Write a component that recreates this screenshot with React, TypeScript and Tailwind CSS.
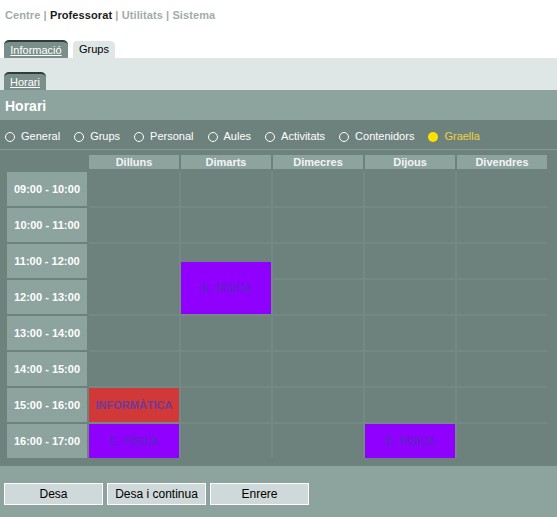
import React from 'react';

const days = ['Dilluns', 'Dimarts', 'Dimecres', 'Dijous', 'Divendres'];
const hours = [
  '09:00 - 10:00',
  '10:00 - 11:00',
  '11:00 - 12:00',
  '12:00 - 13:00',
  '13:00 - 14:00',
  '14:00 - 15:00',
  '15:00 - 16:00',
  '16:00 - 17:00',
];
const options = ['General', 'Grups', 'Personal', 'Aules', 'Activitats', 'Contenidors', 'Graella'];

const Radio = ({ label, active }: { label: string; active?: boolean }) => (
  <div className="flex items-center mr-[14px]">
    {active ? (
      <span className="w-[10px] h-[10px] rounded-full bg-[#ffe000]" />
    ) : (
      <span className="w-[10px] h-[10px] rounded-full border border-white" />
    )}
    <span className={`ml-[6px] ${active ? 'text-[#f2d23a]' : 'text-white'}`}>{label}</span>
  </div>
);

export default function App() {
  return (
    <div className="w-[557px] h-[517px] flex flex-col bg-white font-['Liberation_Sans',Arial,sans-serif] text-[11px]">
      {/* top nav */}
      <div className="h-[40px] pt-[7px] pl-[5px] font-bold text-[#a2aca9] tracking-[0.1px]">
        Centre <span>|</span> <span className="text-[#1a1a1a]">Professorat</span> | Utilitats | Sistema
      </div>

      {/* tabs */}
      <div className="h-[18px] flex items-end gap-[4px] pl-[4px]">
        <div className="h-[18px] w-[64px] rounded-t-[5px] border-t-2 border-[#2f3d3a] bg-[#7b8f8a] text-white flex items-center justify-center">
          <span className="underline">Informació</span>
        </div>
        <div className="h-[18px] w-[43px] rounded-t-[5px] border-t border-l border-white bg-[#dee6e6] text-black flex items-center justify-center">
          Grups
        </div>
      </div>
      <div className="h-[32px] bg-[#dee6e6] pt-[14px] pl-[4px]">
        <div className="h-[18px] w-[42px] rounded-t-[5px] border-t-2 border-[#2f3d3a] bg-[#7b8f8a] text-white flex items-center justify-center">
          <span className="underline">Horari</span>
        </div>
      </div>

      {/* title */}
      <div className="h-[30px] bg-[#8da39e] flex items-center pt-[3px] pl-[5px] text-[14px] font-bold text-white">Horari</div>

      {/* panel */}
      <div className="bg-[#6e827d] pb-[8px]">
        <div className="h-[29px] flex items-center pt-[4px] pl-[5px]">
          {options.map(o => (
            <Radio key={o} label={o} active={o === 'Graella'} />
          ))}
        </div>
        <div className="h-px bg-[#889c97]" />

        <div className="pt-[5px] pl-[7px]">
          <div className="grid grid-cols-[80px_repeat(5,90px)] gap-x-[2px]">
            <div />
            {days.map(d => (
              <div key={d} className="h-[14px] bg-[#8da39e] text-[#f2f4f4] font-bold flex items-center justify-center">
                {d}
              </div>
            ))}
          </div>

          <div className="flex gap-[2px] mt-[3px]">
            <div className="w-[80px] flex flex-col gap-[2px]">
              {hours.map(h => (
                <div key={h} className="h-[34px] bg-[#8da39e] text-white font-bold flex items-center justify-center">
                  {h}
                </div>
              ))}
            </div>

            <div className="grid grid-cols-[repeat(5,90px)] grid-rows-[repeat(8,34px)] gap-[2px] bg-[#758984]">
              {/* 09:00 - 11:00 */}
              {Array.from({ length: 10 }).map((_, i) => (
                <div key={'a' + i} className="bg-[#6e827d]" />
              ))}
              {/* 11:00 - 13:00 */}
              <div className="bg-[#6e827d] row-span-2" />
              <div className="bg-[#6e827d] row-span-2 flex flex-col">
                <div className="mt-[18px] flex-1 bg-[#8f00ff] text-[#4b30b0] flex items-center justify-center">E. FÍSICA</div>
              </div>
              <div className="bg-[#6e827d]" />
              <div className="bg-[#6e827d]" />
              <div className="bg-[#6e827d]" />
              <div className="bg-[#6e827d]" />
              <div className="bg-[#6e827d]" />
              <div className="bg-[#6e827d]" />
              {/* 13:00 - 15:00 */}
              {Array.from({ length: 10 }).map((_, i) => (
                <div key={'b' + i} className="bg-[#6e827d]" />
              ))}
              {/* 15:00 - 16:00 */}
              <div className="bg-[#d13838] text-[#6e3a98] font-bold flex items-center justify-center">INFORMÀTICA</div>
              <div className="bg-[#6e827d]" />
              <div className="bg-[#6e827d]" />
              <div className="bg-[#6e827d]" />
              <div className="bg-[#6e827d]" />
              {/* 16:00 - 17:00 */}
              <div className="bg-[#8f00ff] text-[#4b30b0] flex items-center justify-center">E. FÍSICA</div>
              <div className="bg-[#6e827d]" />
              <div className="bg-[#6e827d]" />
              <div className="bg-[#8f00ff] text-[#4b30b0] flex items-center justify-center">E. FÍSICA</div>
              <div className="bg-[#6e827d]" />
            </div>
          </div>
        </div>
      </div>

      {/* buttons */}
      <div className="flex-1 bg-[#8da39e] pt-[17px] pl-[4px] flex gap-[4px] items-start">
        {['Desa', 'Desa i continua', 'Enrere'].map(b => (
          <button key={b} className="w-[99px] h-[22px] bg-[#d0d9d9] border border-white text-black text-[12px] font-['Liberation_Sans',Arial,sans-serif]">
            {b}
          </button>
        ))}
      </div>
    </div>
  );
}
